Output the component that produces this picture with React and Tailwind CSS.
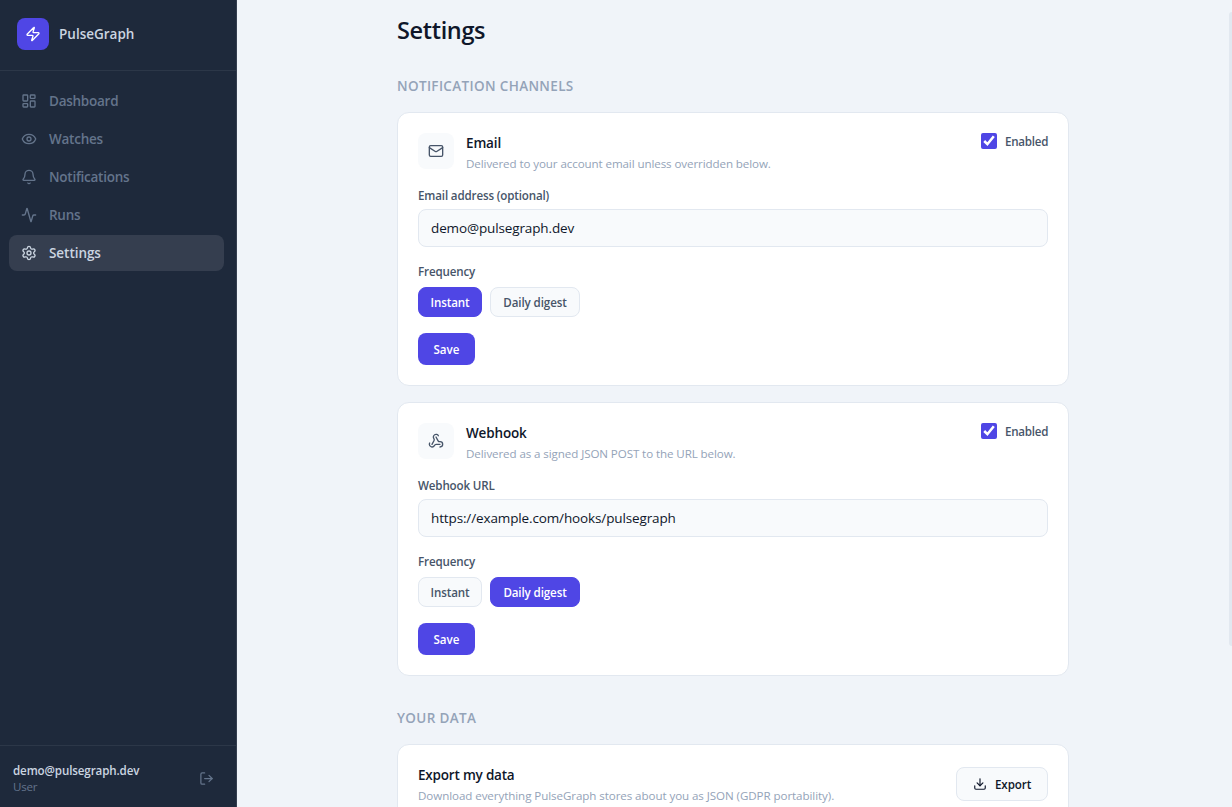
import { useState } from "react";
import {
  Activity,
  Bell,
  Download,
  Eye,
  LayoutDashboard,
  LogOut,
  Mail,
  Settings,
  Webhook,
  Zap,
} from "lucide-react";

const navItems = [
  { label: "Dashboard", icon: LayoutDashboard },
  { label: "Watches", icon: Eye },
  { label: "Notifications", icon: Bell },
  { label: "Runs", icon: Activity },
  { label: "Settings", icon: Settings },
];

const Sidebar = () => {
  const [active, setActive] = useState("Settings");

  return (
    <aside className="flex w-[237px] shrink-0 flex-col border-r border-[#353f50] bg-[#1e293b]">
      <div className="flex h-[71px] items-center gap-2.5 border-b border-[#2c3748] px-[17px] pb-[3px]">
        <span className="grid h-8 w-8 place-items-center rounded-lg bg-[#4f46e5] text-white">
          <Zap size={16} />
        </span>
        <span className="pt-0.5 text-[13.5px] font-semibold text-[#cbd5e1]">
          PulseGraph
        </span>
      </div>

      <nav className="flex flex-1 flex-col gap-0.5 pt-3 pr-3 pl-[9px]">
        {navItems.map(({ label, icon: Icon }) => (
          <button
            key={label}
            type="button"
            onClick={() => setActive(label)}
            className={
              active === label
                ? "flex h-9 items-center gap-3 rounded-lg bg-[#353e4f] px-3 text-[13.5px] font-semibold tracking-[-0.05px] text-[#cbd5e1]"
                : "flex h-9 items-center gap-3 rounded-lg px-3 text-[13.5px] font-semibold tracking-[-0.25px] text-[#64748b]"
            }
          >
            <Icon size={16} />
            <span>{label}</span>
          </button>
        ))}
      </nav>

      <div className="flex h-[62px] items-center justify-between border-t border-[#2c3748] pt-1 pr-[22px] pl-[13px]">
        <div>
          <p className="text-[11.6px] leading-4 font-semibold tracking-[-0.12px] text-[#cbd5e1]">
            demo@pulsegraph.dev
          </p>
          <p className="text-[11.6px] leading-4 tracking-[-0.25px] text-[#64748b]">
            User
          </p>
        </div>
        <button type="button" aria-label="Sign out" className="text-[#64748b]">
          <LogOut size={15} />
        </button>
      </div>
    </aside>
  );
};

const FrequencyButton = ({ selected, onClick, className, children }) => (
  <button
    type="button"
    onClick={onClick}
    className={`${className} h-[30px] rounded-lg border pt-0.5 text-center text-[11.6px] ${
      selected
        ? "border-[#4f46e5] bg-[#4f46e5] font-semibold tracking-[-0.12px] text-white"
        : "border-[#e2e8f0] bg-[#f8fafc] font-[550] tracking-[-0.1px] text-[#475569]"
    }`}
  >
    {children}
  </button>
);

const ChannelCard = ({
  icon: Icon,
  title,
  description,
  fieldLabel,
  defaultValue,
  defaultFrequency,
}) => {
  const [enabled, setEnabled] = useState(true);
  const [value, setValue] = useState(defaultValue);
  const [frequency, setFrequency] = useState(defaultFrequency);
  const labelClass =
    "block text-[11.6px] leading-[18px] font-[550] tracking-[-0.15px] text-[#475569]";

  return (
    <section className="rounded-xl border border-[#e2e8f0] bg-white p-5">
      <div className="flex items-start gap-3">
        <span className="grid h-9 w-9 place-items-center rounded-lg bg-[#f8fafc] text-[#475569]">
          <Icon size={16} />
        </span>
        <div className="flex-1">
          <h3 className="text-[13.5px] leading-[21px] font-semibold tracking-[-0.15px] text-[#0f172a]">
            {title}
          </h3>
          <p className="text-[11.6px] leading-5 tracking-[-0.1px] text-[#94a3b8]">
            {description}
          </p>
        </div>
        <label className="flex items-start gap-2 text-[11.6px] leading-4 font-[550] tracking-[-0.25px] text-[#475569]">
          <input
            type="checkbox"
            checked={enabled}
            onChange={(event) => setEnabled(event.target.checked)}
            className="h-4 w-4 accent-[#4f46e5]"
          />
          <span className="w-[43px] pt-px whitespace-nowrap">Enabled</span>
        </label>
      </div>

      <label className="mt-[13px] block">
        <span className={labelClass}>{fieldLabel}</span>
        <input
          type="text"
          value={value}
          onChange={(event) => setValue(event.target.value)}
          className="mt-1 block h-[38px] w-full rounded-lg border border-[#e2e8f0] bg-[#f8fafc] px-3 text-[13.5px] tracking-[-0.13px] text-[#0f172a] focus:outline-none"
        />
      </label>

      <p className={`mt-4 ${labelClass}`}>Frequency</p>
      <div className="mt-1.5 flex gap-2">
        <FrequencyButton
          className="w-16"
          selected={frequency === "instant"}
          onClick={() => setFrequency("instant")}
        >
          Instant
        </FrequencyButton>
        <FrequencyButton
          className="w-[90px]"
          selected={frequency === "daily"}
          onClick={() => setFrequency("daily")}
        >
          Daily digest
        </FrequencyButton>
      </div>

      <button
        type="button"
        className="mt-4 block h-8 w-[57px] rounded-lg bg-[#4f46e5] pt-0.5 text-[11.6px] font-semibold text-white"
      >
        Save
      </button>
    </section>
  );
};

const SectionTitle = ({ children }) => (
  <h2 className="text-[13.5px] leading-[21px] font-semibold tracking-[0.35px] text-[#94a3b8] uppercase">
    {children}
  </h2>
);

const App = () => {
  return (
    <div className="flex h-screen overflow-hidden bg-[#f0f4f9] font-['Open_Sans','Noto_Sans',sans-serif]">
      <Sidebar />

      <main className="relative flex-1 overflow-hidden pr-[3px]">
        <div className="mx-auto w-[672px] pt-3">
          <h1 className="text-[23.5px] leading-9 font-semibold tracking-[-0.35px] text-[#0f172a]">
            Settings
          </h1>

          <div className="mt-7">
            <SectionTitle>Notification channels</SectionTitle>
            <div className="mt-[15px] flex flex-col gap-4">
              <ChannelCard
                icon={Mail}
                title="Email"
                description="Delivered to your account email unless overridden below."
                fieldLabel="Email address (optional)"
                defaultValue="demo@pulsegraph.dev"
                defaultFrequency="instant"
              />
              <ChannelCard
                icon={Webhook}
                title="Webhook"
                description="Delivered as a signed JSON POST to the URL below."
                fieldLabel="Webhook URL"
                defaultValue="https://example.com/hooks/pulsegraph"
                defaultFrequency="daily"
              />
            </div>
          </div>

          <div className="mt-8">
            <SectionTitle>Your data</SectionTitle>
            <section className="mt-[15px] flex items-start justify-between rounded-xl border border-[#e2e8f0] bg-white p-5">
              <div>
                <h3 className="text-[13.5px] leading-[21px] font-semibold tracking-[-0.2px] text-[#0f172a]">
                  Export my data
                </h3>
                <p className="text-[11.6px] leading-5 tracking-[-0.08px] text-[#94a3b8]">
                  Download everything PulseGraph stores about you as JSON (GDPR
                  portability).
                </p>
              </div>
              <button
                type="button"
                className="mt-0.5 flex h-[34px] w-[92px] items-center gap-2 rounded-lg border border-[#e2e8f0] bg-[#f8fafc] pl-4 text-[11.6px] font-semibold tracking-[-0.1px] text-[#0f172a]"
              >
                <Download size={14} />
                <span className="pt-0.5">Export</span>
              </button>
            </section>
          </div>
        </div>

        {/* scroll thumb */}
        <div className="absolute top-3 right-0 h-[634px] w-[3px] rounded-l-[3px] bg-[#e2e8f0]" />
      </main>
    </div>
  );
};

export default App;
